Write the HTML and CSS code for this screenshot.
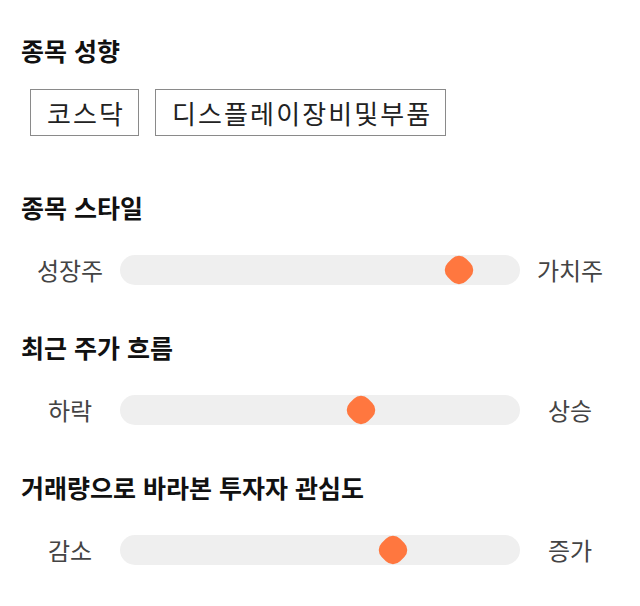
FILE: index.html
```html
<!DOCTYPE html>
<html lang="ko">
<head>
<meta charset="utf-8">
<link rel="stylesheet" href="styles.css">
</head>
<body>
<main class="page">
  <section class="block block-first">
    <h2 class="title">종목 성향</h2>
    <div class="tags">
      <span class="tag">코스닥</span>
      <span class="tag">디스플레이장비및부품</span>
    </div>
  </section>
  <section class="block">
    <h2 class="title">종목 스타일</h2>
    <div class="scale">
      <span class="label">성장주</span>
      <div class="track"><span class="thumb" style="left:84.75%"></span></div>
      <span class="label">가치주</span>
    </div>
  </section>
  <section class="block">
    <h2 class="title">최근 주가 흐름</h2>
    <div class="scale">
      <span class="label">하락</span>
      <div class="track"><span class="thumb" style="left:60.25%"></span></div>
      <span class="label">상승</span>
    </div>
  </section>
  <section class="block">
    <h2 class="title">거래량으로 바라본 투자자 관심도</h2>
    <div class="scale">
      <span class="label">감소</span>
      <div class="track"><span class="thumb" style="left:68.25%"></span></div>
      <span class="label">증가</span>
    </div>
  </section>
</main>
</body>
</html>
```
FILE: styles.css
```css
* { box-sizing: border-box; }
html, body { margin: 0; padding: 0; background: #fff; }
body {
  font-family: "Noto Sans CJK KR", "Noto Sans", sans-serif;
  color: #111;
}
.page {
  padding: 35px 20px 0 20px;
  display: flex;
  flex-direction: column;
  gap: 56px;
}
.block { display: flex; flex-direction: column; gap: 33px; }
.block + .block + .block { margin-top: -9px; }
.block-first { gap: 24px; }
.title {
  margin: 0;
  font-size: 25px;
  line-height: 30px;
  font-weight: 700;
  color: #111;
  padding-left: 1px;
}
.tags { display: flex; gap: 16px; padding-left: 10px; }
.tag {
  height: 47px;
  padding: 0 13px 0 16px;
  border: 1px solid #8a8a8a;
  font-size: 26px;
  letter-spacing: 2.1px;
  line-height: 45px;
  color: #222;
}
.scale {
  display: grid;
  grid-template-columns: 100px 400px 100px;
  align-items: center;
  height: 30px;
}
.label {
  text-align: center;
  font-size: 24px;
  line-height: 30px;
  color: #444;
}
.track {
  position: relative;
  height: 30px;
  background: #efefef;
  border-radius: 15px;
}
.thumb {
  position: absolute;
  top: 50%;
  width: 26px;
  height: 26px;
  background: #ff773f;
  border-radius: 10px;
  transform: translate(-50%, -50%) rotate(45deg);
}
```
